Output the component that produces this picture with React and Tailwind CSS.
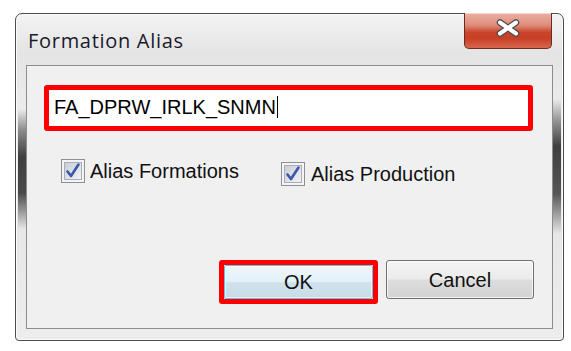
import React from 'react'

function CheckBox() {
  return (
    <svg width="24" height="24" viewBox="0 0 24 24" className="shrink-0">
      <rect x="0.5" y="0.5" width="23" height="23" fill="#f4f4f4" stroke="#8e8f8f" />
      <defs>
        <linearGradient id="cbg" x1="0" y1="0" x2="1" y2="1">
          <stop offset="0" stopColor="#c9ccd6" />
          <stop offset="1" stopColor="#f2f3f6" />
        </linearGradient>
      </defs>
      <rect x="3.5" y="3.5" width="17" height="17" fill="url(#cbg)" stroke="#a9adb8" />
      <path d="M6.5 12.5 L10 17 L17.5 5.5" fill="none" stroke="#3b58a8" strokeWidth="2.6" strokeLinecap="round" strokeLinejoin="round" />
    </svg>
  )
}

function CloseGlyph() {
  return (
    <svg width="26" height="18" viewBox="0 0 26 18">
      <path d="M5 3.5 L21 14.5 M21 3.5 L5 14.5" stroke="#4d4d4d" strokeWidth="6.5" strokeLinecap="round" />
      <path d="M5 3.5 L21 14.5 M21 3.5 L5 14.5" stroke="#ffffff" strokeWidth="4" strokeLinecap="round" />
    </svg>
  )
}

export default function App() {
  return (
    <div className="w-[571px] h-[351px] bg-white pl-[15px] pt-[13px] font-['Liberation_Sans',Arial,sans-serif]">
      {/* Window frame */}
      <div className="relative w-[549px] h-[328px] flex flex-col border border-[#4c4c4c] rounded-t-[7px] rounded-b-[4px] bg-[linear-gradient(180deg,#f3f3f3_0%,#e4e4e4_12%,#ececec_30%,#e6e6e6_60%,#ededed_100%)] shadow-[inset_0_0_0_1px_#fbfbfb]">
        {/* Glass shading on the sides */}
        <div className="absolute left-[2px] top-[95px] w-[8px] h-[120px] bg-[linear-gradient(180deg,rgba(90,90,90,0)_0%,#8a8a8a_18%,#3f3f3f_40%,#4a4a4a_70%,rgba(120,120,120,0)_100%)] pointer-events-none" />
        <div className="absolute right-[2px] top-[85px] w-[8px] h-[135px] bg-[linear-gradient(180deg,rgba(90,90,90,0)_0%,#9a9a9a_15%,#3f3f3f_35%,#555_70%,rgba(120,120,120,0)_100%)] pointer-events-none" />

        {/* Title bar */}
        <div className="h-[51px] flex items-start justify-between pl-[12px] pr-[11px]">
          <span className="mt-[15px] text-[20px] leading-[24px] text-[#1a1a2c] font-['Open_Sans',sans-serif] tracking-[0.7px]">
            Formation Alias
          </span>
          <div className="-mt-px w-[88px] h-[36px] flex items-center justify-center pb-[5px] border border-[#6e2a1f] border-t-0 rounded-b-[5px] bg-[linear-gradient(180deg,#eab0a4_0%,#df8d7b_35%,#c9452b_55%,#c63f26_72%,#d8664c_100%)] shadow-[inset_0_1px_0_rgba(255,255,255,0.5)]">
            <CloseGlyph />
          </div>
        </div>

        {/* Client area */}
        <div className="relative z-10 mx-[10px] mb-[11px] flex-1 flex flex-col border border-[#8c8c8c] bg-[#f0f0f0]">
          {/* Alias text box */}
          <div className="mt-[19px] ml-[17px] mr-[19px] h-[46px] border-[5px] border-[#ff0000] rounded-[3px] bg-white flex items-center pl-[5px] pb-[3px]">
            <span className="text-[20px] leading-[24px] text-black">FA_DPRW_IRLK_SNMN</span>
            <span className="ml-[1px] w-px h-[22px] bg-black" />
          </div>

          {/* Options */}
          <div className="mt-[28px] ml-[34px] flex items-start">
            <label className="flex items-center gap-[5px]">
              <CheckBox />
              <span className="text-[20px] leading-[24px] text-[#111]">Alias Formations</span>
            </label>
            <label className="ml-[42px] mt-[3px] flex items-center gap-[6px]">
              <CheckBox />
              <span className="text-[20px] leading-[24px] text-[#111]">Alias Production</span>
            </label>
          </div>

          {/* Buttons */}
          <div className="mt-auto mb-[24px] mr-[18px] flex justify-end items-start gap-[8px]">
            <div className="w-[159px] h-[44px] border-[5px] border-[#ff0000] rounded-[3px]">
              <button className="w-full h-full border border-[#5ec3ea] rounded-[2px] bg-[linear-gradient(180deg,#eef7fc_0%,#e3f0f8_48%,#cfe2ec_52%,#c8dce7_100%)] text-[20px] leading-[24px] text-[#111] shadow-[inset_0_0_0_1px_rgba(255,255,255,0.6)]">
                OK
              </button>
            </div>
            <button className="w-[148px] h-[39px] border border-[#707070] rounded-[3px] bg-[linear-gradient(180deg,#f4f4f4_0%,#ebebeb_48%,#dddddd_52%,#d3d3d3_100%)] text-[20px] leading-[24px] text-[#111] shadow-[inset_0_0_0_1px_rgba(255,255,255,0.7)]">
              Cancel
            </button>
          </div>
        </div>
      </div>
    </div>
  )
}
